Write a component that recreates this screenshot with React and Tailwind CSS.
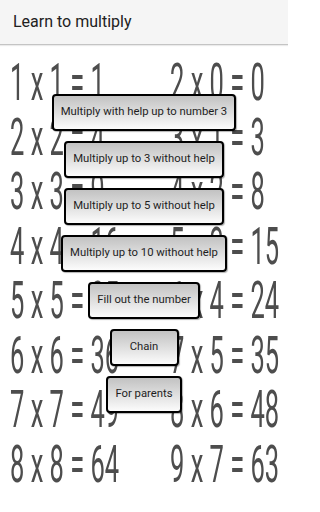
import React from "react";

const left = ["1 x 1 = 1", "2 x 2 = 4", "3 x 3 = 9", "4 x 4 = 16", "5 x 5 = 25", "6 x 6 = 36", "7 x 7 = 49", "8 x 8 = 64"];
const right = ["2 x 0 = 0", "3 x 1 = 3", "4 x 2 = 8", "5 x 3 = 15", "6 x 4 = 24", "7 x 5 = 35", "8 x 6 = 48", "9 x 7 = 63"];

const buttons = [
  "Multiply with help up to number 3",
  "Multiply up to 3 without help",
  "Multiply up to 5 without help",
  "Multiply up to 10 without help",
  "Fill out the number",
  "Chain",
  "For parents",
];

export default function App() {
  return (
    <div className="w-[288px] h-[512px] overflow-hidden bg-white flex flex-col font-['Roboto',sans-serif]">
      <div className="h-[45px] shrink-0 bg-[#f5f5f5] border-b border-[#c4c4c4] flex items-center px-[13px] shadow-[0_1px_1px_rgba(0,0,0,0.08)]">
        <span className="text-[16px] text-[#212121]">Learn to multiply</span>
      </div>
      <div className="relative flex-1">
        <div className="absolute inset-0 pt-[11px] blur-[0.7px] text-[#4d4d4d] select-none">
          {left.map((l, i) => (
            <div key={l} className="h-[54.5px] flex items-center">
              <div className="w-[170px] pl-[10px]">
                <span className="inline-block text-[52px] leading-none whitespace-nowrap origin-left scale-x-[0.49]">{l}</span>
              </div>
              <span className="inline-block text-[52px] leading-none whitespace-nowrap origin-left scale-x-[0.49]">{right[i]}</span>
            </div>
          ))}
        </div>
        <div className="relative flex flex-col items-center gap-[10px] pt-[49px]">
          {buttons.map((b) => (
            <button
              key={b}
              className="h-[37px] min-w-[69px] px-[7px] border-2 border-black rounded-[4px] bg-gradient-to-b from-[#c2c2c2] to-[#fcfcfc] text-[11.3px] text-[#1e1e1e] shadow-[1px_1px_1px_rgba(0,0,0,0.3)]"
            >
              {b}
            </button>
          ))}
        </div>
      </div>
    </div>
  );
}
